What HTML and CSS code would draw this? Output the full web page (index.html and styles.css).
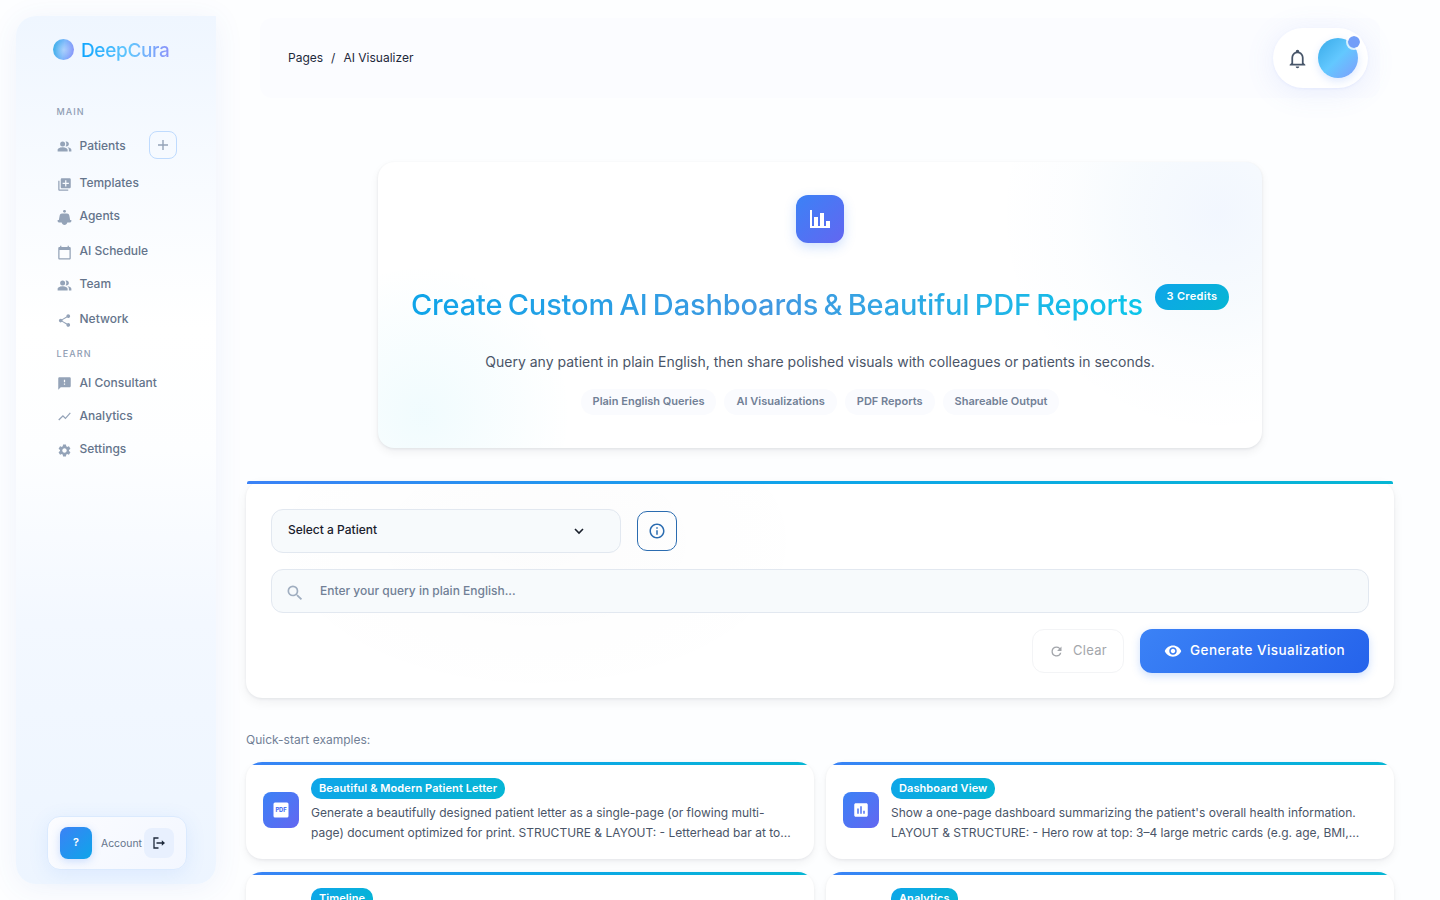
FILE: index.html
```html
<!DOCTYPE html>
<html lang="en">
<head>
  <meta charset="UTF-8" />
  <meta name="viewport" content="width=device-width, initial-scale=1.0" />
  <title>DeepCura - AI Visualizer</title>
  <link rel="stylesheet" href="styles.css">
</head>
<body>

  <!-- Sidebar -->
  <aside class="sidebar">
    <div class="brand">
      <span class="brand-orb"></span>
      <span class="brand-name">DeepCura</span>
    </div>

    <nav class="nav">
      <div class="nav-label">MAIN</div>
      <a class="nav-item nav-patients">
        <svg viewBox="0 0 24 24"><path d="M16.67 13.13C18.04 14.06 19 15.32 19 17v3h4v-3c0-2.18-3.57-3.47-6.33-3.87zM15 12c2.21 0 4-1.79 4-4s-1.79-4-4-4c-.47 0-.91.1-1.33.24C14.5 5.27 15 6.58 15 8s-.5 2.73-1.33 3.76c.42.14.86.24 1.33.24zM9 4a4 4 0 1 0 0 8 4 4 0 0 0 0-8zm0 9c-2.67 0-8 1.34-8 4v3h16v-3c0-2.66-5.33-4-8-4z"/></svg>
        <span>Patients</span>
        <span class="add-button"><svg viewBox="0 0 12 12"><path d="M6 1v10M1 6h10"/></svg></span>
      </a>
      <a class="nav-item">
        <svg viewBox="0 0 24 24"><path d="M4 6H2v14c0 1.1.9 2 2 2h14v-2H4V6zm16-4H8c-1.1 0-2 .9-2 2v12c0 1.1.9 2 2 2h12c1.1 0 2-.9 2-2V4c0-1.1-.9-2-2-2zm-1 9h-4v4h-2v-4H9V9h4V5h2v4h4v2z"/></svg>
        <span>Templates</span>
      </a>
      <a class="nav-item short raised">
        <svg viewBox="0 0 24 24"><circle cx="12" cy="2" r="2.2"/><path d="M8 5.500h8c2 0 3.300 1.200 3.800 3.500L21 16h1c1 0 1.500 1 1 2-.5 1.500-1.500 2-3 2h-3.500c-.5 2.500-2.300 4-4.500 4s-4-1.500-4.500-4H4c-1.500 0-2.500-.5-3-2-.5-1 0-2 1-2h1l1.200-7c.5-2.300 1.800-3.500 3.800-3.500z"/></svg>
        <span>Agents</span>
      </a>
      <a class="nav-item">
        <svg viewBox="0 0 24 24"><path d="M20 3h-1V1h-2v2H7V1H5v2H4c-1.100 0-2 .9-2 2v16c0 1.100.9 2 2 2h16c1.100 0 2-.9 2-2V5c0-1.100-.9-2-2-2zm0 18H4V8h16v13z"/></svg>
        <span>AI Schedule</span>
      </a>
      <a class="nav-item short raised">
        <svg viewBox="0 0 24 24"><path d="M16.67 13.13C18.04 14.06 19 15.32 19 17v3h4v-3c0-2.18-3.57-3.47-6.33-3.87zM15 12c2.21 0 4-1.79 4-4s-1.79-4-4-4c-.47 0-.91.1-1.33.24C14.5 5.27 15 6.58 15 8s-.5 2.73-1.33 3.76c.42.14.86.24 1.33.24zM9 4a4 4 0 1 0 0 8 4 4 0 0 0 0-8zm0 9c-2.67 0-8 1.34-8 4v3h16v-3c0-2.66-5.33-4-8-4z"/></svg>
        <span>Team</span>
      </a>
      <a class="nav-item">
        <svg viewBox="0 0 24 24"><path d="M18 16.080c-.76 0-1.440.3-1.960.77L8.910 12.700c.05-.23.09-.46.09-.7s-.04-.47-.09-.7l7.050-4.110c.54.5 1.250.81 2.040.81 1.660 0 3-1.340 3-3s-1.340-3-3-3-3 1.340-3 3c0 .24.04.47.09.7L8.040 9.810C7.500 9.310 6.790 9 6 9c-1.660 0-3 1.340-3 3s1.340 3 3 3c.79 0 1.500-.31 2.040-.81l7.120 4.160c-.05.21-.08.43-.08.65 0 1.610 1.310 2.920 2.920 2.920s2.920-1.310 2.920-2.920-1.310-2.920-2.920-2.920z"/></svg>
        <span>Network</span>
      </a>
      <div class="nav-label learn">LEARN</div>
      <a class="nav-item short">
        <svg class="icon-up" viewBox="0 0 24 24"><path d="M20 2H4c-1.100 0-1.990.9-1.990 2L2 22l4-4h14c1.100 0 2-.9 2-2V4c0-1.100-.9-2-2-2zm-7 12h-2v-2h2v2zm0-4h-2V6h2v4z"/></svg>
        <span>AI Consultant</span>
      </a>
      <a class="nav-item short">
        <svg class="icon-up" viewBox="0 0 24 24"><path d="M3.500 18.490l6-6.010 4 4L22 6.920l-1.410-1.410-7.090 7.970-4-4L2 16.990z"/></svg>
        <span>Analytics</span>
      </a>
      <a class="nav-item short">
        <svg viewBox="0 0 24 24"><path d="M19.140 12.940c.04-.3.060-.61.060-.94 0-.32-.02-.64-.07-.94l2.030-1.580c.18-.14.23-.41.120-.61l-1.920-3.320c-.12-.22-.37-.29-.59-.22l-2.390.96c-.5-.38-1.030-.7-1.620-.94l-.36-2.540c-.04-.24-.24-.41-.48-.41h-3.840c-.24 0-.43.17-.47.41l-.36 2.540c-.59.24-1.130.57-1.620.94l-2.390-.96c-.22-.08-.47 0-.59.22L2.740 8.870c-.12.21-.08.47.12.61l2.030 1.580c-.05.3-.09.63-.09.94s.02.64.07.94l-2.030 1.580c-.18.14-.23.41-.12.61l1.920 3.320c.12.22.37.29.59.22l2.390-.96c.5.38 1.030.7 1.620.94l.36 2.540c.05.24.24.41.48.41h3.840c.24 0 .44-.17.47-.41l.36-2.540c.59-.24 1.130-.56 1.620-.94l2.390.96c.22.08.47 0 .59-.22l1.920-3.320c.12-.22.070-.47-.12-.61l-2.010-1.580zM12 15.600c-1.980 0-3.600-1.620-3.600-3.600s1.620-3.600 3.600-3.600 3.600 1.620 3.600 3.600-1.620 3.600-3.600 3.600z"/></svg>
        <span>Settings</span>
      </a>
    </nav>

    <div class="account">
      <div class="account-avatar">?</div>
      <span class="account-name">Account</span>
      <div class="logout">
        <svg viewBox="0 0 14 14"><path d="M6.500 2H2v10h4.500M4.500 7h6.500" fill="none" stroke="#1e293b" stroke-width="1.300"/><path d="M9.800 4.200 13 7l-3.200 2.800z" fill="#1e293b"/></svg>
      </div>
    </div>
  </aside>

  <!-- Main content -->
  <main class="main">
    <header class="topbar">
      <div class="breadcrumb"><span>Pages</span><span>/</span><span>AI Visualizer</span></div>
      <div class="user-pill">
        <svg class="bell" viewBox="0 0 24 24"><path d="M10 21h4c0 1.100-.9 2-2 2s-2-.9-2-2m11-2v1H3v-1l2-2v-6c0-3.100 2.030-5.830 5-6.710V4a2 2 0 0 1 4 0v.29c2.970.88 5 3.610 5 6.710v6l2 2m-4-8a5 5 0 0 0-10 0v7h10v-7z"/></svg>
        <div class="avatar"><span class="avatar-dot"></span></div>
      </div>
    </header>

    <section class="hero">
      <div class="hero-icon">
        <svg viewBox="0 0 24 24"><path d="M22 21H2V3h2v16h2v-9h4v9h2V6h4v13h2v-5h4v7z"/></svg>
      </div>
      <div class="hero-heading">
        <h1>Create Custom AI Dashboards &amp; Beautiful PDF Reports</h1>
        <span class="credits">3 Credits</span>
      </div>
      <p class="hero-text">Query any patient in plain English, then share polished visuals with colleagues or patients in seconds.</p>
      <div class="chips">
        <span class="chip">Plain English Queries</span>
        <span class="chip">AI Visualizations</span>
        <span class="chip">PDF Reports</span>
        <span class="chip">Shareable Output</span>
      </div>
    </section>

    <section class="query-card">
      <div class="row">
        <div class="patient-select">
          <span>Select a Patient</span>
          <svg viewBox="0 0 12 12"><path d="M2 4l4 4 4-4"/></svg>
        </div>
        <div class="info-button">
          <svg viewBox="0 0 24 24"><path d="M11 7h2v2h-2zm0 4h2v6h-2zm1-9C6.480 2 2 6.480 2 12s4.480 10 10 10 10-4.480 10-10S17.520 2 12 2zm0 18c-4.410 0-8-3.590-8-8s3.590-8 8-8 8 3.590 8 8-3.590 8-8 8z"/></svg>
        </div>
      </div>
      <div class="query-input">
        <svg viewBox="0 0 24 24"><path d="M15.500 14h-.79l-.28-.27A6.471 6.471 0 0 0 16 9.500 6.500 6.500 0 1 0 9.500 16c1.610 0 3.090-.59 4.230-1.570l.27.28v.79l5 4.990L20.490 19l-4.990-5zm-6 0C7.010 14 5 11.990 5 9.500S7.010 5 9.500 5 14 7.010 14 9.500 11.990 14 9.500 14z"/></svg>
        <span>Enter your query in plain English...</span>
      </div>
      <div class="row actions">
        <div class="clear-button">
          <svg viewBox="0 0 24 24"><path d="M17.650 6.350A7.958 7.958 0 0 0 12 4a8 8 0 1 0 7.730 10h-2.080A5.990 5.990 0 0 1 12 18c-3.310 0-6-2.690-6-6s2.690-6 6-6c1.660 0 3.140.69 4.220 1.780L13 11h7V4l-2.350 2.350z"/></svg>
          <span>Clear</span>
        </div>
        <div class="generate-button">
          <svg viewBox="0 0 24 24"><path d="M12 4.500C7 4.500 2.730 7.610 1 12c1.730 4.390 6 7.500 11 7.500s9.270-3.110 11-7.500c-1.730-4.390-6-7.500-11-7.500zM12 17c-2.760 0-5-2.240-5-5s2.240-5 5-5 5 2.240 5 5-2.240 5-5 5zm0-8c-1.660 0-3 1.340-3 3s1.340 3 3 3 3-1.340 3-3-1.340-3-3-3z"/></svg>
          <span>Generate Visualization</span>
        </div>
      </div>
    </section>

    <div class="examples-label">Quick-start examples:</div>

    <section class="examples">
      <div class="example">
        <div class="example-icon">
          <svg viewBox="0 0 24 24"><rect x="2" y="2" width="20" height="20" rx="2"/><text x="12" y="15" text-anchor="middle" textLength="15" lengthAdjust="spacingAndGlyphs">PDF</text></svg>
        </div>
        <div class="example-body">
          <span class="tag">Beautiful &amp; Modern Patient Letter</span>
          <p>Generate a beautifully designed patient letter as a single-page (or flowing multi-<br>page) document optimized for print. STRUCTURE &amp; LAYOUT: - Letterhead bar at to...</p>
        </div>
      </div>
      <div class="example">
        <div class="example-icon">
          <svg viewBox="0 0 24 24"><path d="M19 3H5c-1.100 0-2 .9-2 2v14c0 1.100.9 2 2 2h14c1.100 0 2-.9 2-2V5c0-1.100-.9-2-2-2zM9 17H7v-7h2v7zm4 0h-2V7h2v10zm4 0h-2v-4h2v4z"/></svg>
        </div>
        <div class="example-body">
          <span class="tag">Dashboard View</span>
          <p>Show a one-page dashboard summarizing the patient's overall health information.<br>LAYOUT &amp; STRUCTURE: - Hero row at top: 3–4 large metric cards (e.g. age, BMI,...</p>
        </div>
      </div>
      <div class="example">
        <div class="example-icon"></div>
        <div class="example-body"><span class="tag">Timeline</span></div>
      </div>
      <div class="example">
        <div class="example-icon"></div>
        <div class="example-body"><span class="tag">Analytics</span></div>
      </div>
    </section>
  </main>

</body>
</html>
```

FILE: styles.css
```css
* {
  box-sizing: border-box;
}

body {
  margin: 0;
  height: 900px;
  overflow: hidden;
  display: flex;
  font-family: Inter, sans-serif;
  background: #fdfeff;
  color: #475569;
}

svg {
  fill: currentColor;
  flex: none;
}

/* Sidebar */
.sidebar {
  width: 200px;
  height: 868px;
  margin: 16px 30px 16px 16px;
  flex: none;
  display: flex;
  flex-direction: column;
  border-radius: 20px 0 20px 20px;
  background: linear-gradient(180deg, #eff6ff 0%, #f8fbff 20%, #fff 36%, #fdfeff 50%, #f3f8ff 70%, #edf5ff 100%);
  box-shadow: 0 4px 30px rgba(59, 100, 200, 0.08);
}

.brand {
  display: flex;
  align-items: center;
  gap: 7px;
  padding: 22px 0 0 37px;
  height: 46px;
}

.brand-orb {
  width: 21px;
  height: 21px;
  margin-top: -1px;
  border-radius: 50%;
  background: radial-gradient(circle at 52% 52%, rgba(255, 255, 255, 0.35), transparent 60%), linear-gradient(100deg, #38b0e8, #7db8fb 50%, #8b93fa);
}

.brand-name {
  margin-top: 1px;
  font-size: 19px;
  font-weight: 500;
  letter-spacing: -0.35px;
  line-height: 24px;
  background: linear-gradient(90deg, #0ea5fe, #63c6fd 55%, #8b93fa);
  -webkit-background-clip: text;
  background-clip: text;
  color: transparent;
}

.nav {
  padding: 41px 39px 0 40.5px;
}

.nav-label {
  height: 22px;
  padding-top: 3px;
  font-size: 9px;
  font-weight: 500;
  line-height: 11px;
  letter-spacing: 1.1px;
  color: #8f9db3;
  margin-bottom: 1px;
}

.nav-label.learn {
  height: 30px;
  padding-top: 12px;
  margin-bottom: 0;
}

.nav-item {
  display: flex;
  align-items: center;
  gap: 8px;
  height: 35px;
  font-size: 12px;
  font-weight: 500;
  color: #64748b;
}

.nav-item.short {
  height: 33px;
}

.nav-item.raised {
  padding-bottom: 2px;
}

.nav-item > svg {
  width: 15px;
  height: 15px;
  margin-top: 3px;
  color: #94a3b8;
}

.nav-item > svg.icon-up {
  margin-top: 1px;
}

.nav-patients {
  height: 39px;
}

.nav-patients > svg {
  margin-top: 2px;
}

.add-button {
  width: 28px;
  height: 28px;
  margin: -2px 0 0 auto;
  border: 1px solid #bfdbfe;
  border-radius: 8px;
  display: flex;
  align-items: center;
  justify-content: center;
}

.add-button svg {
  width: 12px;
  height: 12px;
  stroke: #94a3b8;
  stroke-width: 1.4;
}

.account {
  width: 140px;
  height: 54px;
  margin: auto auto 14px 31px;
  padding: 0 12px;
  display: flex;
  align-items: center;
  border: 1px solid #dbeafe;
  border-radius: 13px;
  background: linear-gradient(135deg, #fbfcff, #f3f7ff);
  box-shadow: 0 4px 20px rgba(59, 130, 246, 0.1);
}

.account-avatar {
  width: 32px;
  height: 32px;
  border-radius: 8px;
  background: linear-gradient(135deg, #3b82f6, #0ea5e9);
  box-shadow: 0 2px 8px rgba(59, 130, 246, 0.25);
  color: #fff;
  font-size: 11px;
  font-weight: 600;
  line-height: 31px;
  text-align: center;
}

.account-name {
  margin: 1px 2px 0 9px;
  font-size: 10.4px;
  width: 41px;
  color: #64748b;
}

.logout {
  width: 30px;
  height: 30px;
  border-radius: 8px;
  background: #e8f0fe;
  display: flex;
  align-items: center;
  justify-content: center;
}

.logout svg {
  width: 14px;
  height: 14px;
}

/* Main column */
.main {
  width: 1148px;
  padding-top: 18px;
}

.topbar {
  height: 80px;
  margin: 0 14px 64px;
  padding: 0 12px 0 28px;
  display: flex;
  align-items: center;
  justify-content: space-between;
  border-radius: 12px;
  background: #fbfcff;
}

.breadcrumb {
  display: flex;
  gap: 8px;
  margin-top: -2px;
  font-size: 12px;
  color: #1e293b;
}

.user-pill {
  width: 95px;
  height: 60px;
  padding: 0 10px 0 14px;
  display: flex;
  align-items: center;
  justify-content: space-between;
  border-radius: 30px;
  background: #fff;
  box-shadow: 0 4px 30px rgba(99, 130, 241, 0.12), 0 1px 3px rgba(99, 130, 241, 0.08);
}

.bell {
  width: 21px;
  height: 21px;
  margin-top: 1px;
  color: #475569;
}

.avatar {
  position: relative;
  width: 40px;
  height: 40px;
  border-radius: 50%;
  background: linear-gradient(135deg, #38aae8, #63c8ff 50%, #7f9cfb);
  box-shadow: 0 3px 8px rgba(80, 140, 250, 0.2);
}

.avatar-dot {
  position: absolute;
  top: -4px;
  right: -4px;
  width: 16px;
  height: 16px;
  border: 2px solid rgba(255, 255, 255, 0.75);
  border-radius: 50%;
  background: #739ef8;
  background-clip: padding-box;
}

/* Hero */
.hero {
  width: 884px;
  height: 286px;
  margin: 0 auto 33px;
  padding-top: 33px;
  display: flex;
  flex-direction: column;
  align-items: center;
  border-radius: 16px;
  background:
    radial-gradient(circle at 95% 18%, rgba(59, 130, 246, 0.065), rgba(66, 153, 225, 0.045) 90px, rgba(66, 153, 225, 0.015) 150px, transparent 220px),
    radial-gradient(circle at 5% 88%, rgba(11, 197, 234, 0.06), transparent 150px),
    #fff;
  box-shadow: 0 4px 10px rgba(15, 23, 42, 0.06), 0 1px 3px rgba(15, 23, 42, 0.08);
}

.hero-icon {
  width: 48px;
  height: 48px;
  border-radius: 12px;
  background: linear-gradient(135deg, #3b82f6, #6366f1);
  box-shadow: 0 4px 12px rgba(59, 130, 246, 0.25);
  color: #fff;
  display: flex;
  align-items: center;
  justify-content: center;
}

.hero-icon svg {
  width: 24px;
  height: 24px;
}

.hero-heading {
  width: 818px;
  margin-top: 41px;
  display: flex;
  justify-content: space-between;
  align-items: flex-start;
}

h1 {
  margin: 0;
  font-size: 29px;
  font-weight: 500;
  line-height: 42px;
  letter-spacing: -0.16px;
  word-spacing: -2.2px;
  white-space: nowrap;
  background: linear-gradient(90deg, #0ea5e9, #4299e1 50%, #0bc5ea);
  -webkit-background-clip: text;
  background-clip: text;
  color: transparent;
}

.credits {
  width: 74px;
  height: 26px;
  border-radius: 13px;
  background: linear-gradient(135deg, #0ea5e9, #06b6d4);
  color: #fff;
  font-size: 11px;
  font-weight: 600;
  line-height: 25px;
  letter-spacing: 0.3px;
  text-align: center;
}

.hero-text {
  margin: 25px 0 0;
  font-size: 14px;
  line-height: 22px;
  color: #4a5568;
}

.chips {
  display: flex;
  gap: 8px;
  margin-top: 16px;
}

.chip {
  height: 26px;
  padding: 0 12px;
  border-radius: 13px;
  background: #fafbfe;
  color: #718096;
  font-size: 11px;
  font-weight: 600;
  line-height: 25px;
}

/* Query form */
.query-card {
  height: 217px;
  padding: 0 25px;
  display: flex;
  flex-direction: column;
  gap: 16px;
  border-radius: 16px;
  background: radial-gradient(ellipse 300px 170px at 290px 60px, rgba(15, 23, 42, 0.012), transparent) #fff;
  box-shadow: 0 4px 12px rgba(15, 23, 42, 0.06), 0 1px 3px rgba(15, 23, 42, 0.07);
}

.query-card::before {
  content: "";
  height: 3px;
  margin: 0 -24px 9px;
  flex: none;
  border-radius: 2px 2px 0 0;
  background: linear-gradient(90deg, #3b82f6, #0ea5e9 50%, #06b6d4);
}

.row {
  display: flex;
  align-items: center;
  gap: 16px;
}

.patient-select {
  width: 350px;
  height: 44px;
  padding: 0 35px 2px 16px;
  display: flex;
  align-items: center;
  justify-content: space-between;
  border: 1px solid #e2e8f0;
  border-radius: 12px;
  background: #f7fafc;
  color: #1a202c;
  font-size: 12px;
  font-weight: 500;
}

.patient-select span {
  margin-top: -1px;
}

.patient-select svg {
  width: 12px;
  height: 12px;
  margin-top: 2px;
  fill: none;
  stroke: #1a202c;
  stroke-width: 1.6;
}

.info-button {
  width: 40px;
  height: 40px;
  border: 1px solid #2b6cb0;
  border-radius: 10px;
  color: #2b6cb0;
  display: flex;
  align-items: center;
  justify-content: center;
}

.info-button svg {
  width: 18px;
  height: 18px;
}

.query-input {
  height: 44px;
  padding: 0 13px;
  display: flex;
  align-items: center;
  gap: 15px;
  border: 1px solid #e2e8f0;
  border-radius: 12px;
  background: #f7fafc;
  color: #718096;
  font-size: 12px;
  font-weight: 500;
}

.query-input svg {
  width: 20px;
  height: 20px;
  margin-top: 3px;
  color: #a0aec0;
}

.query-input span {
  margin-top: -1px;
}

.actions {
  justify-content: flex-end;
}

.clear-button,
.generate-button {
  height: 44px;
  display: flex;
  align-items: center;
  gap: 8px;
  border-radius: 12px;
}

.clear-button span,
.generate-button span {
  margin-top: -2px;
}

.clear-button {
  width: 92px;
  padding-left: 16px;
  gap: 9px;
  border: 1px solid #f3f4f6;
  color: #a3a6ab;
  font-size: 13px;
  letter-spacing: 0.3px;
}

.clear-button svg {
  width: 15px;
  height: 15px;
}

.generate-button {
  width: 229px;
  padding-left: 24px;
  background: linear-gradient(135deg, #3b82f6, #2563eb);
  box-shadow: 0 3px 8px rgba(59, 130, 246, 0.25);
  color: #fff;
  font-size: 13.5px;
  font-weight: 500;
  letter-spacing: 0.45px;
}

.generate-button svg {
  width: 18px;
  height: 18px;
}

/* Examples */
.examples-label {
  margin: 32px 0 12px;
  font-size: 12px;
  line-height: 20px;
  color: #718096;
}

.examples {
  display: grid;
  grid-template-columns: 1fr 1fr;
  grid-auto-rows: 97px;
  gap: 13px 12px;
}

.example {
  padding: 16px 17px 0;
  display: flex;
  gap: 12px;
  border-radius: 16px;
  background: linear-gradient(90deg, #3b82f6, #0ea5e9 50%, #06b6d4) 0 0 / 100% 3px no-repeat #fff;
  box-shadow: 0 4px 10px rgba(15, 23, 42, 0.05), 0 1px 3px rgba(15, 23, 42, 0.06);
}

.example-icon {
  width: 36px;
  height: 36px;
  margin-top: 14px;
  flex: none;
  border-radius: 8px;
  background: linear-gradient(135deg, #3b82f6, #6366f1);
  color: #fff;
  display: flex;
  align-items: center;
  justify-content: center;
}

.example-icon svg {
  width: 18px;
  height: 18px;
}

.example-icon text {
  fill: #4f74f3;
  font-size: 8.5px;
  font-weight: 800;
}

.tag {
  display: block;
  width: max-content;
  height: 21px;
  padding: 0 8px;
  border-radius: 10px;
  background: linear-gradient(135deg, #0ea5e9, #06b6d4);
  color: #fff;
  font-size: 11px;
  font-weight: 600;
  line-height: 21px;
  letter-spacing: 0.08px;
}

.example p {
  margin: 4px 0 0;
  font-size: 12px;
  line-height: 20px;
  color: #4a5568;
  white-space: nowrap;
}
```
